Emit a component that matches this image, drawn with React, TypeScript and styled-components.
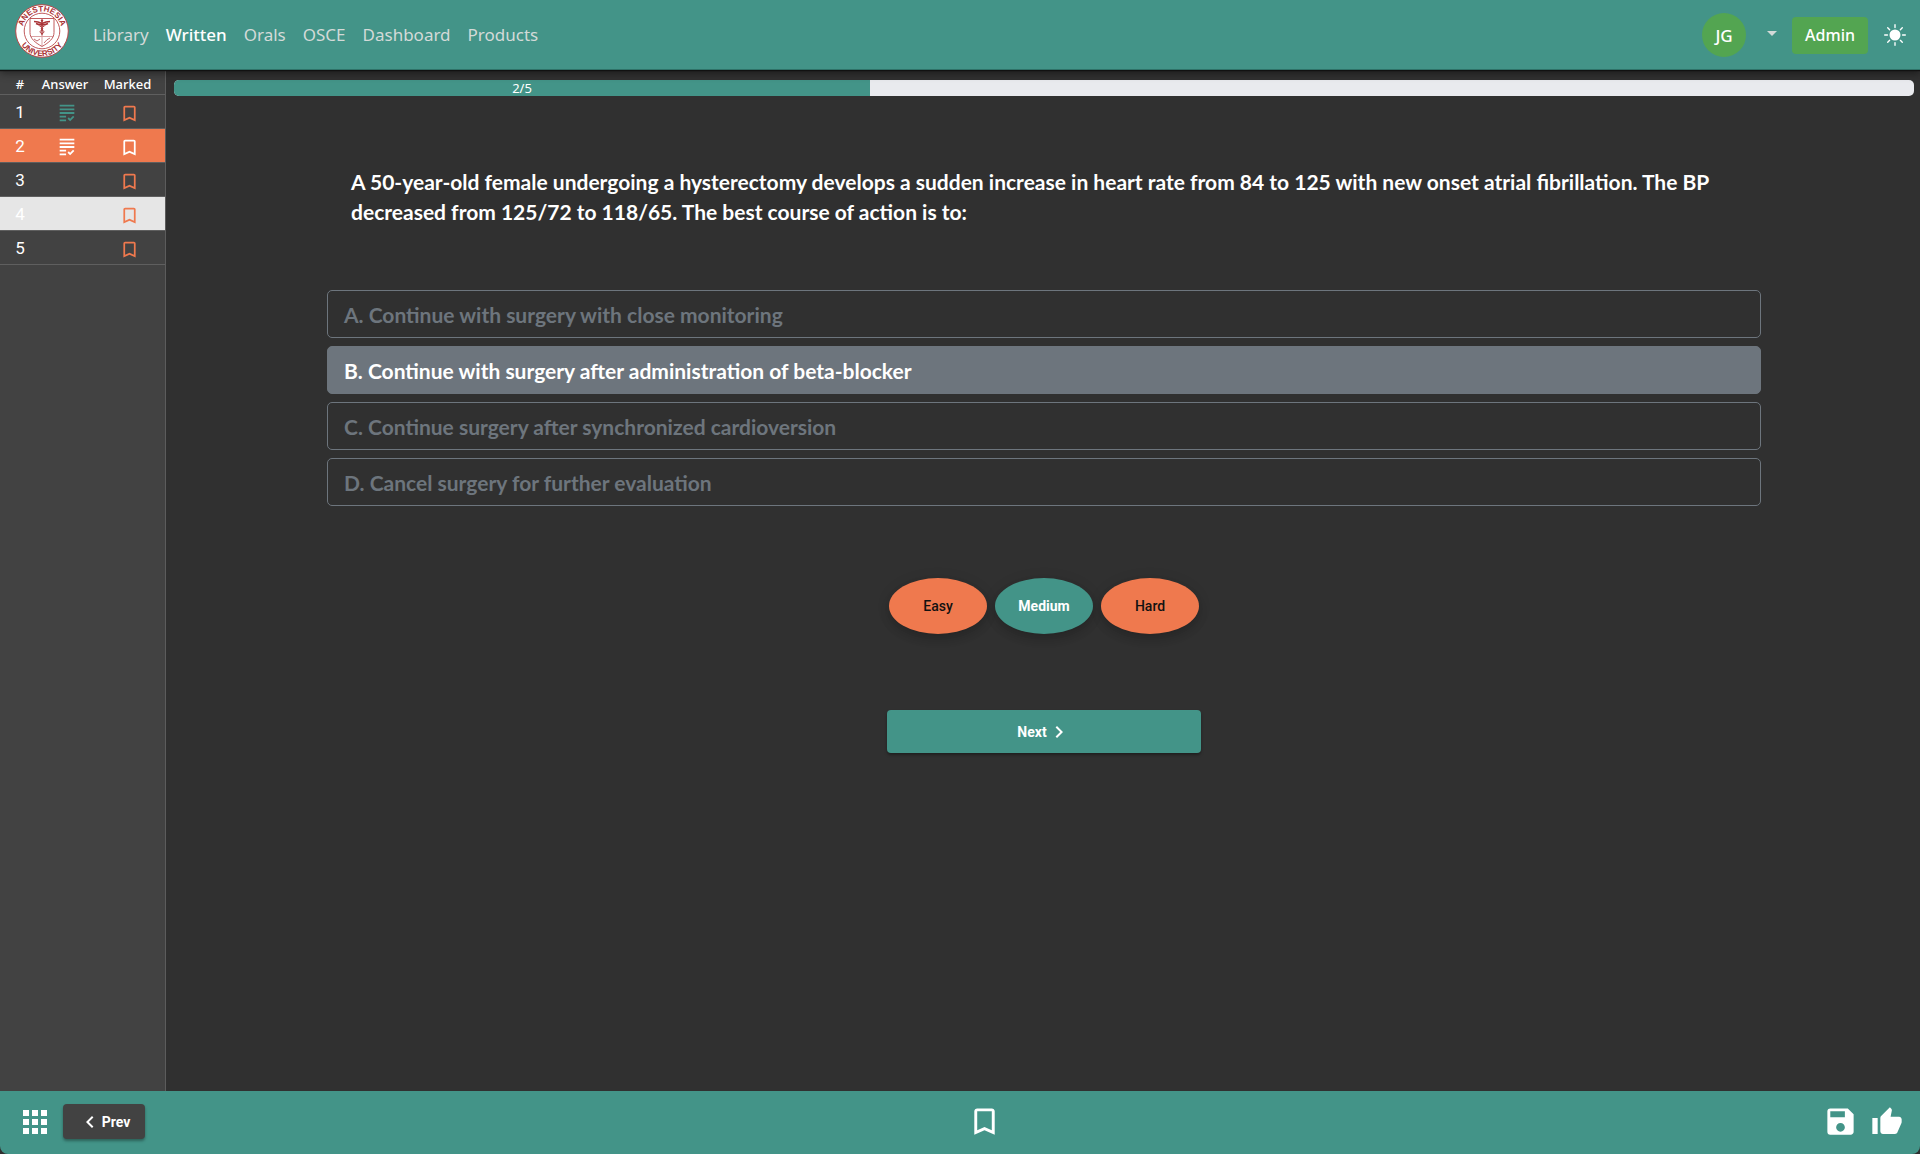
import React, { useState } from "react";
import styled, { createGlobalStyle, css } from "styled-components";
import {
  MdArrowDropDown,
  MdBookmarkBorder,
  MdChevronLeft,
  MdChevronRight,
  MdGrading,
  MdSave,
  MdThumbUp,
} from "react-icons/md";
import { BsSunFill } from "react-icons/bs";

const teal = "#439488";
const orange = "#ef794e";
const humanist = `"Noto Sans", "Open Sans", sans-serif`;
const geometric = `Lato, "Open Sans", sans-serif`;
const roboto = `Roboto, "Liberation Sans", sans-serif`;

const GlobalStyle = createGlobalStyle`
  *, *::before, *::after { box-sizing: border-box; }
  body { margin: 0; background: #303030; color: #fff; font-family: ${roboto}; }
  button { font: inherit; color: inherit; border: 0; padding: 0; background: none; cursor: pointer; }
  svg { display: block; }
`;

const Page = styled.div`
  display: flex;
  flex-direction: column;
  min-height: 100vh;
`;

const Header = styled.header`
  position: relative;
  display: flex;
  align-items: center;
  justify-content: space-between;
  height: 70px;
  padding: 1px 14px 0 15px;
  background: ${teal};
  border-bottom: 1px solid #2f7268;
  box-shadow: 0 1px 1px #111, 0 3px 8px rgba(0, 0, 0, 0.45);
  font-family: ${humanist};
`;

const HeaderGroup = styled.div`
  display: flex;
  align-items: center;
`;

const LogoLink = styled.a`
  display: block;
  margin-right: 24px;
  padding-bottom: 8px;
`;

const Nav = styled.nav`
  display: flex;
  gap: 17px;
`;

const NavLink = styled.a<{ $active?: boolean }>`
  font-size: 17px;
  line-height: 24px;
  text-decoration: none;
  font-weight: ${(p) => (p.$active ? 500 : 400)};
  color: ${(p) => (p.$active ? "#fff" : "#d3dad8")};
`;

const Avatar = styled.span`
  display: grid;
  place-items: center;
  width: 44px;
  height: 44px;
  border-radius: 50%;
  background: #53a551;
  font-size: 17px;
  font-weight: 500;
`;

const CaretButton = styled.button`
  margin: 0 8px 4px 14px;
  color: #d3dad8;
`;

const AdminButton = styled.button`
  height: 37px;
  padding: 0 13px;
  margin-right: 16px;
  border-radius: 4px;
  background: #53a551;
  font-size: 16px;
  font-weight: 500;
`;

const Body = styled.div`
  display: flex;
  flex: 1;
`;

const Sidebar = styled.aside`
  flex: 0 0 166px;
  background: #424242;
  border-right: 1px solid #5c5c5c;
`;

const QuestionTable = styled.table`
  width: 100%;
  border-collapse: collapse;
  table-layout: fixed;
`;

const HeadCell = styled.th<{ $width: number }>`
  width: ${(p) => p.$width}px;
  height: 24px;
  padding: 4px 0 0;
  border-bottom: 1px solid #5f5f5f;
  font-family: ${humanist};
  font-size: 13px;
  line-height: 18px;
  font-weight: 500;
`;

type RowState = "plain" | "current" | "hover";

const rowTone = {
  plain: css`
    background: #424242;
    --mark: ${orange};
    --answer: ${teal};
  `,
  current: css`
    background: ${orange};
    --mark: #fff;
    --answer: #fff;
  `,
  hover: css`
    background: #e6e6e6;
    --mark: ${orange};
    --answer: ${teal};
  `,
};

const Row = styled.tr<{ $state: RowState }>`
  height: 34px;
  border-bottom: 1px solid #5f5f5f;
  ${(p) => rowTone[p.$state]}
`;

const Cell = styled.td`
  padding: 2px 0 0;
  font-size: 17px;
  line-height: 20px;
  text-align: center;
  vertical-align: middle;
`;

const IconCell = styled(Cell)<{ $tone: "answer" | "mark" }>`
  color: var(--${(p) => p.$tone});
  padding: 4px 0 0 4px;

  svg {
    margin: 0 auto;
  }
`;

const Main = styled.main`
  flex: 1;
  min-width: 0;
  padding: 10px 6px 40px 8px;
`;

const Track = styled.div`
  height: 16px;
  border-radius: 5px;
  background: #e9eaee;
  overflow: hidden;
`;

const Fill = styled.div`
  height: 100%;
  background: ${teal};
  font-family: ${humanist};
  font-size: 13px;
  line-height: 17px;
  text-align: center;
`;

const Content = styled.div`
  display: flex;
  flex-direction: column;
  align-items: center;
  width: calc(100% * 10 / 12);
  margin: 0 auto;
  padding: 71px 8px 0;
  font-family: ${geometric};
`;

const Question = styled.h1`
  align-self: stretch;
  margin: 0 0 63px;
  padding: 0 24px;
  font-size: 21px;
  line-height: 30px;
  font-weight: 700;
`;

const Options = styled.div`
  align-self: stretch;
  display: flex;
  flex-direction: column;
  gap: 8px;
`;

const Option = styled.button<{ $selected: boolean }>`
  height: 48px;
  padding: 1px 16px 0;
  border: 1px solid #6d757d;
  border-radius: 5px;
  background: ${(p) => (p.$selected ? "#6d757d" : "transparent")};
  color: ${(p) => (p.$selected ? "#fff" : "#6d757d")};
  font-size: 21px;
  line-height: 30px;
  font-weight: 700;
  text-align: left;
`;

const Ratings = styled.div`
  display: flex;
  gap: 8px;
  margin-top: 72px;
  font-family: ${roboto};
`;

const Rating = styled.button<{ $selected: boolean }>`
  width: 98px;
  height: 56px;
  border-radius: 50%;
  background: ${(p) => (p.$selected ? teal : orange)};
  color: ${(p) => (p.$selected ? "#fff" : "#111")};
  font-size: 14px;
  font-weight: ${(p) => (p.$selected ? 700 : 500)};
  box-shadow: 0 6px 10px rgba(0, 0, 0, 0.14), 0 1px 14px rgba(0, 0, 0, 0.1);
`;

const RaisedButton = styled.button<{ $tone: string; $width: number; $height: number }>`
  display: flex;
  align-items: center;
  justify-content: center;
  width: ${(p) => p.$width}px;
  height: ${(p) => p.$height}px;
  border-radius: 4px;
  background: ${(p) => p.$tone};
  font-family: ${roboto};
  font-size: 14px;
  font-weight: 700;
  box-shadow: 0 2px 3px rgba(0, 0, 0, 0.35);
`;

const NextArea = styled.div`
  margin-top: 76px;
`;

const Footer = styled.footer`
  display: flex;
  align-items: center;
  justify-content: space-between;
  height: 63px;
  padding: 0 17px 2px 23px;
  background: ${teal};
  border-radius: 0 0 8px 8px;
`;

const FooterGroup = styled.div<{ $gap: number }>`
  display: flex;
  align-items: center;
  gap: ${(p) => p.$gap}px;
`;

const Logo = () => (
  <svg width="54" height="54" viewBox="0 0 54 54" role="img" aria-label="Anesthesia University">
    <defs>
      <path id="ring-top" d="M7.5 27a19.5 19.5 0 0 1 39 0" />
      <path id="ring-bottom" d="M2 27a25 25 0 0 0 50 0" />
    </defs>
    <circle cx="27" cy="27" r="26.3" fill="#fff" stroke="#b9484b" strokeWidth="1" />
    <circle cx="27" cy="27" r="17.8" fill="#fff" stroke="#b9484b" strokeWidth="0.9" />
    <g fill="#a93236" fontFamily="Liberation Sans, sans-serif" fontWeight="700" fontSize="8" textAnchor="middle">
      <text>
        <textPath href="#ring-top" startOffset="50%">ANESTHESIA</textPath>
      </text>
      <text>
        <textPath href="#ring-bottom" startOffset="50%">UNIVERSITY</textPath>
      </text>
    </g>
    <path d="M15 14.5h24v14c0 6-5 10-12 14c-7-4-12-8-12-14z" fill="#fff" stroke="#b9484b" strokeWidth="0.9" />
    <path d="M15.4 32.5h23.2M27 33v9" stroke="#c9797b" strokeWidth="0.7" />
    <g fill="none" stroke="#a93236">
      <path d="M27 16.5v15" strokeWidth="1.3" />
      <path d="M19 17.5q4 0 8 2q4-2 8-2M21 19.5q3 1.5 6 1.5q3 0 6-1.5" strokeWidth="1.5" />
      <path d="M24.5 22q5 2 2.5 4q-4 1.5 0 4M29.5 22q-5 2-2.5 4q4 1.5 0 4" strokeWidth="0.9" />
      <path d="M19 35l3 2 3-2M29 39q3-4 6-5" strokeWidth="0.7" />
    </g>
    <circle cx="27" cy="16.5" r="1.2" fill="#a93236" />
  </svg>
);

const GridIcon = () => (
  <svg width="24" height="24" viewBox="0 0 24 24" fill="#fff" aria-hidden="true">
    {[0, 9, 18].map((y) =>
      [0, 9, 18].map((x) => <rect key={`${x}-${y}`} x={x} y={y} width="6" height="6" />)
    )}
  </svg>
);

const navItems = ["Library", "Written", "Orals", "OSCE", "Dashboard", "Products"];

const rows: { id: number; state: RowState; answered: boolean }[] = [
  { id: 1, state: "plain", answered: true },
  { id: 2, state: "current", answered: true },
  { id: 3, state: "plain", answered: false },
  { id: 4, state: "hover", answered: false },
  { id: 5, state: "plain", answered: false },
];

const options = [
  "A. Continue with surgery with close monitoring",
  "B. Continue with surgery after administration of beta-blocker",
  "C. Continue surgery after synchronized cardioversion",
  "D. Cancel surgery for further evaluation",
];

const levels = ["Easy", "Medium", "Hard"];

export default function App() {
  const [choice, setChoice] = useState(1);
  const [level, setLevel] = useState("Medium");
  const current = 2;

  return (
    <Page>
      <GlobalStyle />
      <Header>
        <HeaderGroup>
          <LogoLink href="#">
            <Logo />
          </LogoLink>
          <Nav>
            {navItems.map((item) => (
              <NavLink key={item} href="#" $active={item === "Written"}>
                {item}
              </NavLink>
            ))}
          </Nav>
        </HeaderGroup>
        <HeaderGroup>
          <Avatar>JG</Avatar>
          <CaretButton aria-label="Account menu">
            <MdArrowDropDown size={24} />
          </CaretButton>
          <AdminButton>Admin</AdminButton>
          <button aria-label="Toggle theme">
            <BsSunFill size={22} />
          </button>
        </HeaderGroup>
      </Header>

      <Body>
        <Sidebar>
          <QuestionTable>
            <thead>
              <tr>
                <HeadCell $width={40}>#</HeadCell>
                <HeadCell $width={50}>Answer</HeadCell>
                <HeadCell $width={75}>Marked</HeadCell>
              </tr>
            </thead>
            <tbody>
              {rows.map((row) => (
                <Row key={row.id} $state={row.state}>
                  <Cell>{row.id}</Cell>
                  <IconCell $tone="answer">{row.answered && <MdGrading size={22} />}</IconCell>
                  <IconCell $tone="mark">
                    <MdBookmarkBorder size={21} />
                  </IconCell>
                </Row>
              ))}
            </tbody>
          </QuestionTable>
        </Sidebar>

        <Main>
          <Track role="progressbar" aria-valuenow={current} aria-valuemin={0} aria-valuemax={rows.length}>
            <Fill style={{ width: `${(current / rows.length) * 100}%` }}>
              {`${current}/${rows.length}`}
            </Fill>
          </Track>
          <Content>
            <Question>
              A 50-year-old female undergoing a hysterectomy develops a sudden increase in heart rate from 84 to 125
              with new onset atrial fibrillation. The BP decreased from 125/72 to 118/65. The best course of action is
              to:
            </Question>
            <Options>
              {options.map((text, i) => (
                <Option key={text} $selected={choice === i} aria-pressed={choice === i} onClick={() => setChoice(i)}>
                  {text}
                </Option>
              ))}
            </Options>
            <Ratings>
              {levels.map((name) => (
                <Rating key={name} $selected={level === name} aria-pressed={level === name} onClick={() => setLevel(name)}>
                  {name}
                </Rating>
              ))}
            </Ratings>
            <NextArea>
              <RaisedButton $tone={teal} $width={314} $height={43}>
                Next <MdChevronRight size={24} />
              </RaisedButton>
            </NextArea>
          </Content>
        </Main>
      </Body>

      <Footer>
        <FooterGroup $gap={16}>
          <button aria-label="All questions">
            <GridIcon />
          </button>
          <RaisedButton $tone="#424242" $width={82} $height={35}>
            <MdChevronLeft size={24} /> Prev
          </RaisedButton>
        </FooterGroup>
        <button aria-label="Bookmark question">
          <MdBookmarkBorder size={35} />
        </button>
        <FooterGroup $gap={13}>
          <button aria-label="Save">
            <MdSave size={35} />
          </button>
          <button aria-label="Like">
            <MdThumbUp size={32} />
          </button>
        </FooterGroup>
      </Footer>
    </Page>
  );
}
